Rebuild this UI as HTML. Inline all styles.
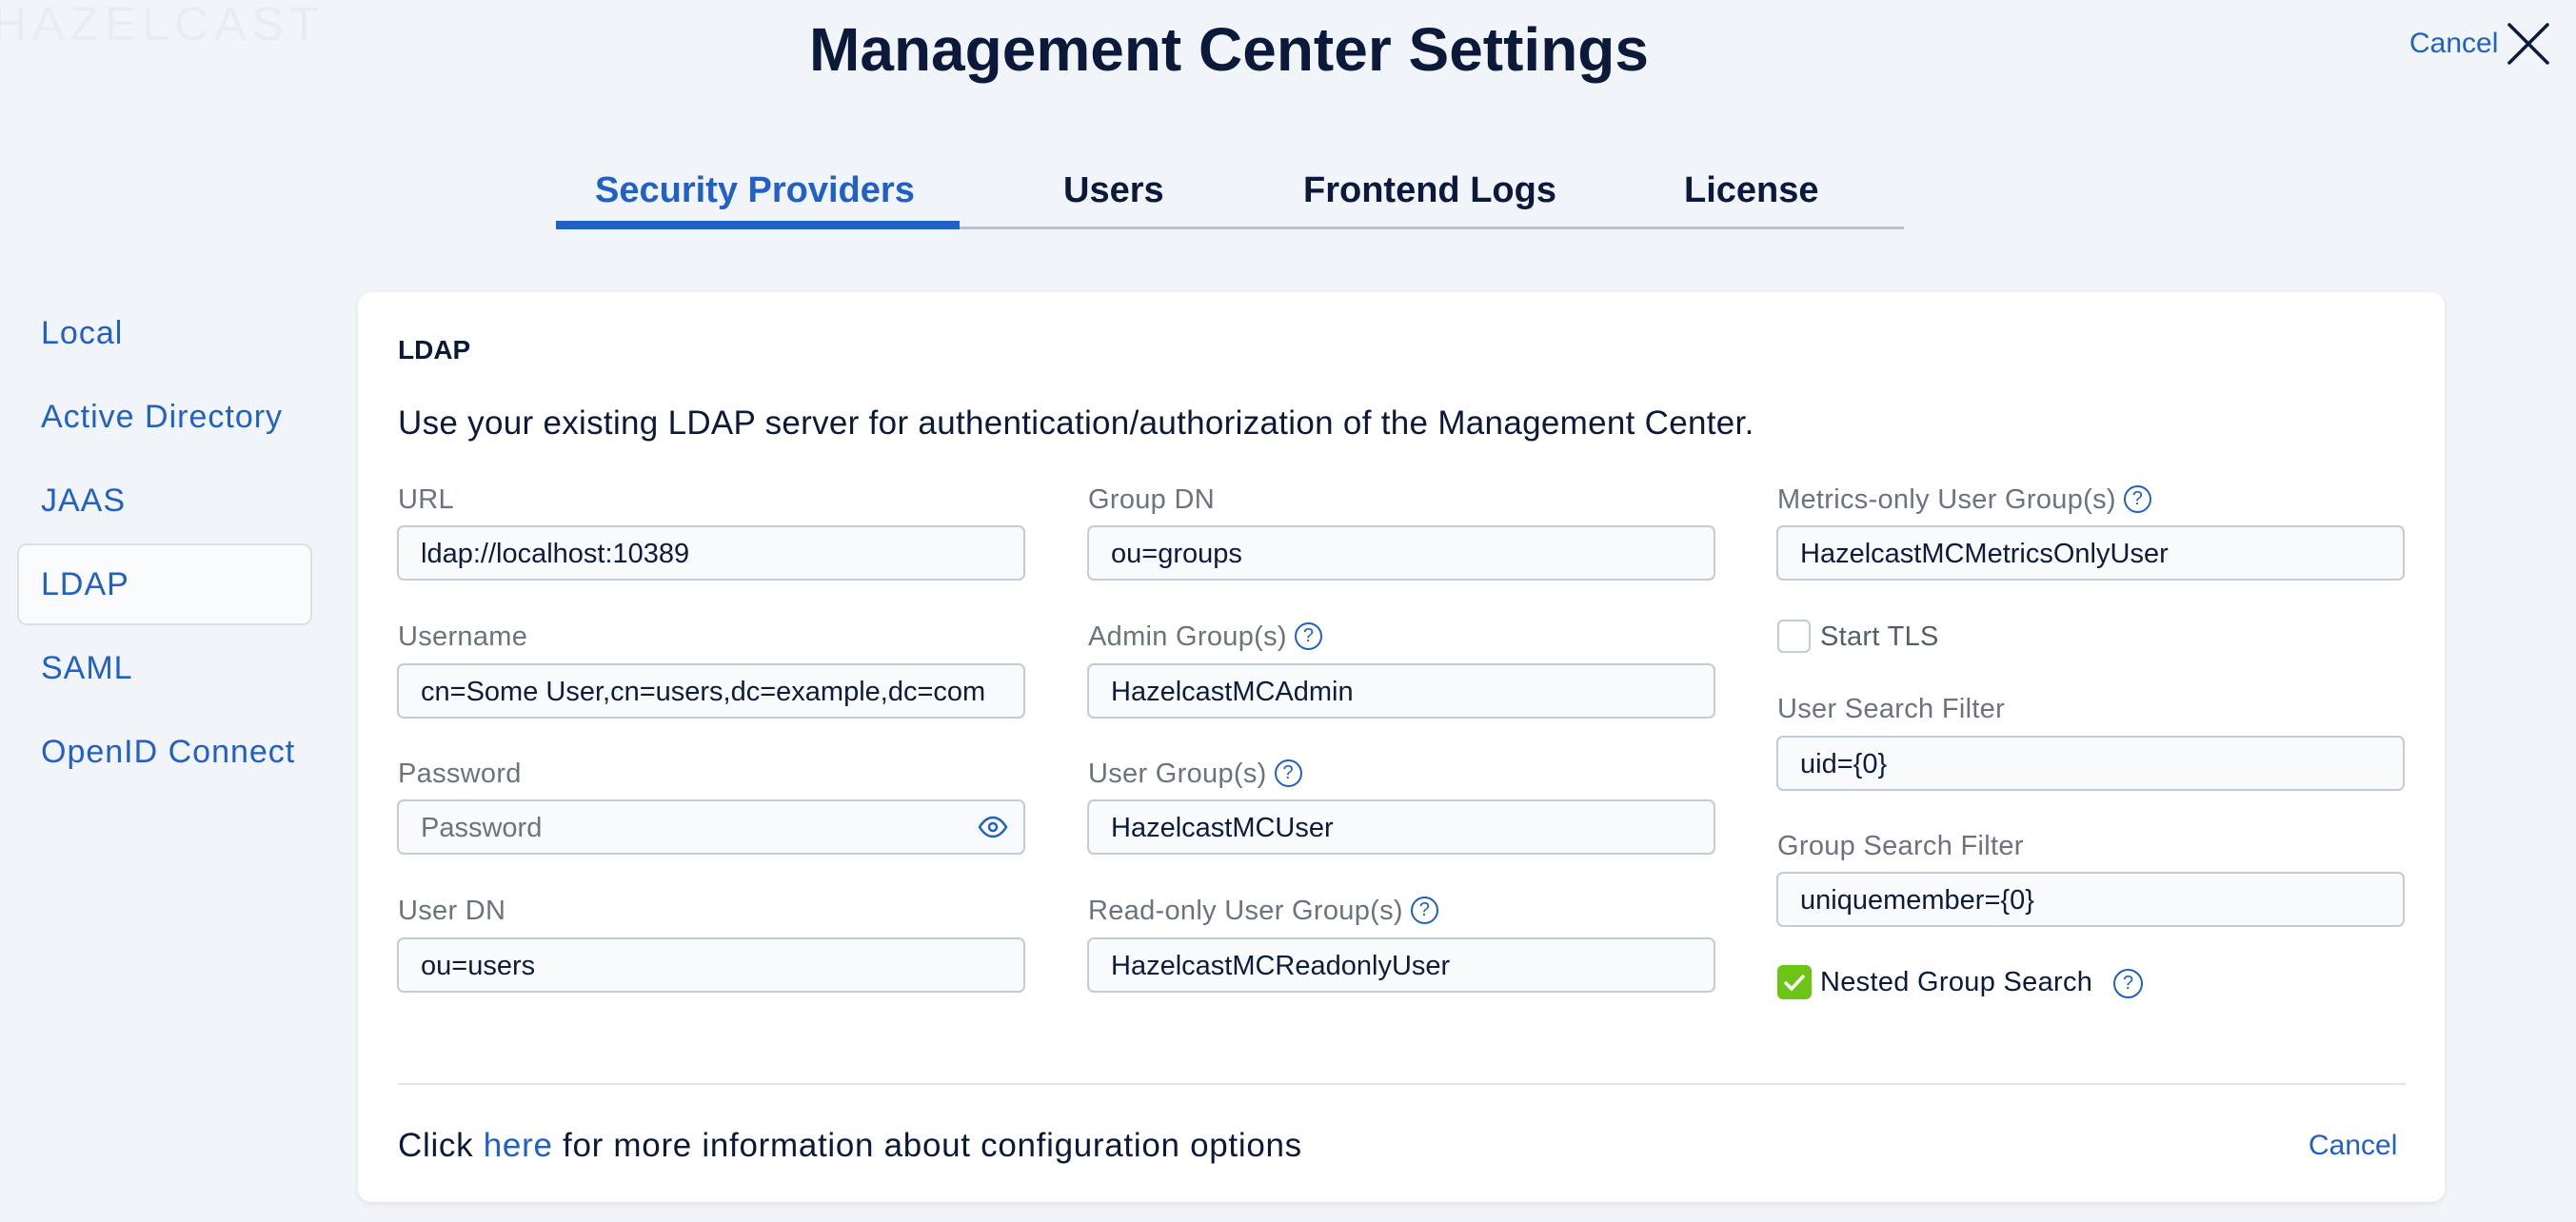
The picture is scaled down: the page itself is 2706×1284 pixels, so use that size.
<!DOCTYPE html>
<html><head><meta charset="utf-8">
<style>
*{margin:0;padding:0;box-sizing:border-box}
body{width:2706px;height:1284px;background:#f1f4f8;position:relative;overflow:hidden;font-family:"Liberation Sans",sans-serif;color:#0d1b3d}
.a{position:absolute;white-space:nowrap}
.ghost{color:#e9edf2}
.title{left:-62px;width:2706px;text-align:center;top:15px;font-size:64px;font-weight:bold;color:#0b1a3a}
.tab{top:179px;font-size:38px;font-weight:bold;color:#0b1a3a}
.side{font-size:34px;color:#2160c4;left:43px;letter-spacing:1px;top:0}
.lbl{font-size:29px;color:#6b7280;letter-spacing:.3px}
.inp{position:absolute;height:58px;width:660px;background:#f9fafb;border:2px solid #c3cbd4;border-radius:7px;font-size:29px;line-height:56px;padding-left:23px;color:#0d1b3d}
.q{display:inline-block;width:29px;height:29px;border:2px solid #2160c4;border-radius:50%;color:#2160c4;font-size:20px;line-height:25px;text-align:center;vertical-align:middle;margin-left:8px;margin-top:-4px;letter-spacing:0}
.big{font-size:35px;letter-spacing:.3px;color:#0b1a3a}
</style></head><body>
<div class="a ghost" style="left:-8px;top:-4px;font-size:50px;letter-spacing:6px">HAZELCAST</div>
<div class="a title">Management Center Settings</div>
<div class="a" style="left:2531px;top:29px;font-size:30px;color:#2160c4">Cancel</div>
<svg class="a" style="left:2632px;top:22px" width="48" height="48" viewBox="0 0 48 48"><path d="M4 4L44 44M44 4L4 44" stroke="#0b1a3a" stroke-width="3.5" stroke-linecap="round"/></svg>

<div class="a tab" style="left:625px;color:#2160c4">Security Providers</div>
<div class="a tab" style="left:1117px">Users</div>
<div class="a tab" style="left:1369px">Frontend Logs</div>
<div class="a tab" style="left:1769px">License</div>
<div class="a" style="left:584px;top:238px;width:1416px;height:3px;background:#b8c1cc"></div>
<div class="a" style="left:584px;top:232px;width:424px;height:9px;background:#2160c4"></div>

<div class="a" style="left:18px;top:571px;width:310px;height:86px;background:#fafbfc;border:2px solid #dcdfe3;border-radius:10px"></div>
<div class="a side" style="top:331px">Local</div>
<div class="a side" style="top:419px">Active Directory</div>
<div class="a side" style="top:507px">JAAS</div>
<div class="a side" style="top:595px">LDAP</div>
<div class="a side" style="top:683px">SAML</div>
<div class="a side" style="top:771px">OpenID Connect</div>

<div class="a" style="left:376px;top:307px;width:2192px;height:956px;background:#fff;border-radius:14px;box-shadow:0 2px 6px rgba(0,0,0,.08)"></div>
<div class="a" style="left:418px;top:352px;font-size:28px;font-weight:bold;color:#0b1a3a">LDAP</div>
<div class="a big" style="left:418px;top:425px">Use your existing LDAP server for authentication/authorization of the Management Center.</div>

<!-- col1 -->
<div class="a lbl" style="left:418px;top:509px">URL</div>
<div class="inp" style="left:417px;top:552px">ldap://localhost:10389</div>
<div class="a lbl" style="left:418px;top:653px">Username</div>
<div class="inp" style="left:417px;top:697px">cn=Some User,cn=users,dc=example,dc=com</div>
<div class="a lbl" style="left:418px;top:797px">Password</div>
<div class="inp" style="left:417px;top:840px;color:#6b7280">Password</div>
<svg class="a" style="left:1027px;top:856px" width="32" height="26" viewBox="0 0 32 26"><path d="M2 13C7 5 12 3 16 3S25 5 30 13C25 21 20 23 16 23S7 21 2 13Z" fill="none" stroke="#2160c4" stroke-width="2.5"/><circle cx="16" cy="13" r="4" fill="none" stroke="#2160c4" stroke-width="2.5"/></svg>
<div class="a lbl" style="left:418px;top:941px">User DN</div>
<div class="inp" style="left:417px;top:985px">ou=users</div>

<!-- col2 -->
<div class="a lbl" style="left:1143px;top:509px">Group DN</div>
<div class="inp" style="left:1142px;top:552px">ou=groups</div>
<div class="a lbl" style="left:1143px;top:653px">Admin Group(s)<span class="q">?</span></div>
<div class="inp" style="left:1142px;top:697px">HazelcastMCAdmin</div>
<div class="a lbl" style="left:1143px;top:797px">User Group(s)<span class="q">?</span></div>
<div class="inp" style="left:1142px;top:840px">HazelcastMCUser</div>
<div class="a lbl" style="left:1143px;top:941px">Read-only User Group(s)<span class="q">?</span></div>
<div class="inp" style="left:1142px;top:985px">HazelcastMCReadonlyUser</div>

<!-- col3 -->
<div class="a lbl" style="left:1867px;top:509px">Metrics-only User Group(s)<span class="q">?</span></div>
<div class="inp" style="left:1866px;top:552px">HazelcastMCMetricsOnlyUser</div>
<div class="a" style="left:1867px;top:651px;width:35px;height:35px;border:2px solid #c3cbd4;border-radius:6px;background:#fff"></div>
<div class="a lbl" style="left:1912px;top:653px;color:#555e6b">Start TLS</div>
<div class="a lbl" style="left:1867px;top:729px">User Search Filter</div>
<div class="inp" style="left:1866px;top:773px">uid={0}</div>
<div class="a lbl" style="left:1867px;top:873px">Group Search Filter</div>
<div class="inp" style="left:1866px;top:916px">uniquemember={0}</div>
<div class="a" style="left:1867px;top:1014px;width:36px;height:36px;border-radius:6px;background:#6cc417"></div>
<svg class="a" style="left:1867px;top:1014px" width="36" height="36" viewBox="0 0 36 36"><path d="M8 18L15 25L28 11" fill="none" stroke="#fff" stroke-width="3.5"/></svg>
<div class="a lbl" style="left:1912px;top:1016px;color:#0b1a3a">Nested Group Search</div>
<span class="a q" style="left:2220px;top:1018px;margin:0;width:31px;height:31px;line-height:27px;font-size:20px">?</span>

<div class="a" style="left:418px;top:1138px;width:2109px;height:2px;background:#e2e4e8"></div>
<div class="a big" style="left:418px;top:1184px;letter-spacing:.7px">Click <span style="color:#2160c4">here</span> for more information about configuration options</div>
<div class="a" style="left:2425px;top:1187px;font-size:30px;color:#2160c4">Cancel</div>
</body></html>
